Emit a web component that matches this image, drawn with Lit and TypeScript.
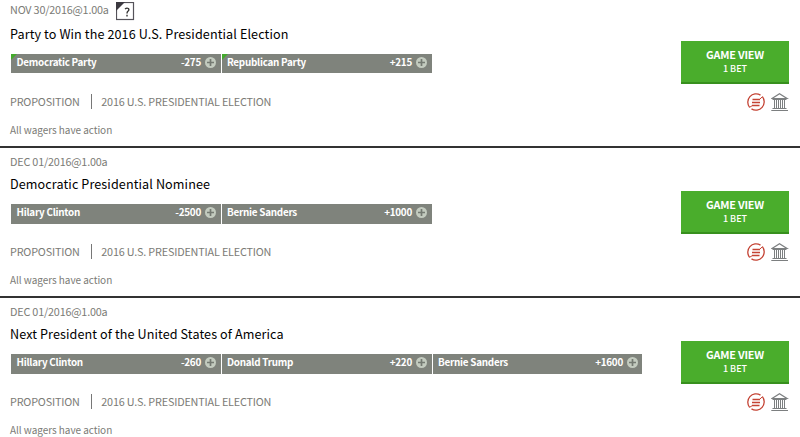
import { LitElement, html, css, nothing } from "lit";
import { customElement, property } from "lit/decorators.js";

interface Pick { name: string; odds: string; }
interface Market { date: string; title: string; picks: Pick[]; help?: boolean; flagged?: boolean; }

const MARKETS: Market[] = [
  {
    date: "NOV 30/2016@1.00a", title: "Party to Win the 2016 U.S. Presidential Election", help: true, flagged: true,
    picks: [{ name: "Democratic Party", odds: "-275" }, { name: "Republican Party", odds: "+215" }],
  },
  {
    date: "DEC 01/2016@1.00a", title: "Democratic Presidential Nominee",
    picks: [{ name: "Hilary Clinton", odds: "-2500" }, { name: "Bernie Sanders", odds: "+1000" }],
  },
  {
    date: "DEC 01/2016@1.00a", title: "Next President of the United States of America",
    picks: [{ name: "Hillary Clinton", odds: "-260" }, { name: "Donald Trump", odds: "+220" }, { name: "Bernie Sanders", odds: "+1600" }],
  },
];

@customElement("market-row")
export class MarketRow extends LitElement {
  @property({ attribute: false }) market!: Market;

  static styles = css`
    :host { display: flex; justify-content: space-between; box-sizing: border-box; height: 150px; padding: 3px 11px 0 10px; border-bottom: 2px solid #333; }
    .info { display: flex; flex-direction: column; }
    .date { display: flex; height: 21px; line-height: 20px; font-size: 10.8px; letter-spacing: -0.18px; color: #7b7b76; gap: 7px; }
    .date.raised { margin-top: -2px; height: 23px; }
    .help { width: 19px; height: 19px; margin-top: 3px; }
    .title { height: 24px; line-height: 24px; font-size: 12.6px; color: #000; letter-spacing: 0.1px; white-space: nowrap; }
    .picks { display: flex; gap: 1px; margin: 8px 0 0 1px; height: 20px; }
    .picks.short { height: 19px; margin-bottom: 1px; }
    .pick { display: flex; align-items: flex-start; box-sizing: border-box; width: 210px; padding: 0 5px; background: #7f837c; color: #fff; font-size: 9.9px; letter-spacing: -0.26px; font-weight: 700; line-height: 16px; }
    .pick:first-child { padding-left: 5.5px; }
    .pick:nth-child(3) { width: 209px; padding-right: 4px; }
    .flagged { background: linear-gradient(135deg, #43a92d 4px, #7f837c 4.5px); }
    .name { flex: 1; white-space: nowrap; }
    .plus { width: 12px; height: 12px; margin: 2px 0 0 3px; }
    .path { display: flex; align-items: center; height: 16px; margin-top: 19px; font-size: 10.8px; letter-spacing: -0.17px; line-height: 16px; color: #7b7b76; white-space: nowrap; }
    .rule { width: 1px; height: 15px; background: #777; margin: 0 9.5px 0 11px; }
    .note { margin-top: 13px; height: 16px; font-size: 10px; line-height: 16px; color: #7b7b76; letter-spacing: -0.05px; }
    .side { display: flex; flex-direction: column; align-items: flex-end; padding-top: 40px; }
    .view { display: flex; flex-direction: column; align-items: center; box-sizing: border-box; width: 108px; height: 43px; padding-top: 6px; background: #4aad2c; border-bottom: 2px solid #37901d; color: #fff; }
    .view-label { font-size: 10.8px; letter-spacing: -0.2px; font-weight: 700; line-height: 14px; }
    .count { font-size: 9px; font-weight: 500; line-height: 14px; padding-top: 1px; }
    .tools { display: flex; gap: 6px; margin-top: 9px; }
    .tool { display: block; height: 19px; }
  `;

  render() {
    const m = this.market;
    return html`
      <div class="info">
        <div class="date ${m.help ? "raised" : ""}"><span class="date-text">${m.date}</span>${m.help ? html`
          <svg class="help" viewBox="0 0 19 19">
            <rect x="0.5" y="0.5" width="17" height="17" fill="#fff" stroke="#55535a" stroke-width="1.2"/>
            <path d="M0 0H9L0 9Z" fill="#3b3940"/>
            <path d="M9 7Q10.8 5.6 12.3 6.5Q13.5 7.7 12.1 9Q11 9.8 11 11.5M11 12.8V14.5" fill="none" stroke="#333" stroke-width="1.4"/>
          </svg>` : nothing}</div>
        <div class="title"><span class="title-text">${m.title}</span></div>
        <div class="picks ${m.flagged ? "short" : ""}">
          ${m.picks.map((p) => html`
            <div class="pick ${m.flagged ? "flagged" : ""}">
              <span class="name">${p.name}</span><span class="odds">${p.odds}</span>
              <svg class="plus" viewBox="0 0 12 12"><circle cx="6.5" cy="6.5" r="5.5" fill="#c3cbbf"/><path d="M6.5 3V10M3 6.5H10" stroke="#747a72" stroke-width="1.7"/></svg>
            </div>`)}
        </div>
        <div class="path"><span>PROPOSITION</span><span class="rule"></span><span>2016 U.S. PRESIDENTIAL ELECTION</span></div>
        <div class="note">All wagers have action</div>
      </div>
      <div class="side">
        <div class="view"><span class="view-label">GAME VIEW</span><span class="count">1 BET</span></div>
        <div class="tools">
          <svg class="tool" width="18" height="19" viewBox="0 0 18 19" fill="none" stroke="#c44334">
            <path d="M13.5 2.1A8.3 8.3 0 0 0 2.6 14.3M4.5 15.9A8.3 8.3 0 0 0 15.4 3.7" stroke-width="1.3"/>
            <path d="M5.5 6.5H13M5 9.5H13M5 12.5H12.5" stroke-width="1.3"/><path d="M12.5 6.5L15.4 3.7M5.5 12.5L2.6 14.3" stroke-width="1"/>
          </svg>
          <svg class="tool" width="18" height="19" viewBox="0 0 18 19" fill="none" stroke="#7c7f80">
            <path d="M1 5.5L8.5.8L16 5.5Z" stroke-width="1.2"/><path d="M1.5 6.5H15.5M1.5 15.5H15.5M.3 17.5H17" stroke-width="1.2"/>
            <path d="M3.5 7V15M5.5 7V15M7.5 7V15M9.5 7V15M11.5 7V15M13.5 7V15"/>
          </svg>
        </div>
      </div>`;
  }
}

@customElement("app-root")
export class AppRoot extends LitElement {
  static styles = css`
    :host { display: block; height: 437px; overflow: hidden; background: #fff; font-family: "Noto Sans CJK SC", "Open Sans", sans-serif; }
    .list { display: flex; flex-direction: column; margin-top: -2px; }
  `;
  render() {
    return html`<div class="list">${MARKETS.map((m) => html`<market-row .market=${m}></market-row>`)}</div>`;
  }
}
